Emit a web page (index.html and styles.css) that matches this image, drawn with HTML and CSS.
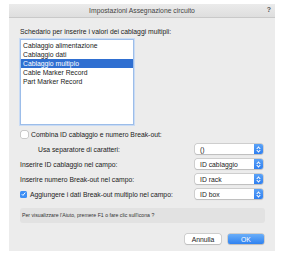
FILE: index.html
```html
<!DOCTYPE html>
<html lang="it">
<head>
  <meta charset="UTF-8" />
  <title>Impostazioni Assegnazione circuito</title>
  <link rel="stylesheet" href="styles.css">
</head>
<body>
  <div class="dialog">
    <div class="titlebar">
      <span class="title">Impostazioni Assegnazione circuito</span>
      <span class="help">?</span>
    </div>

    <div class="content">
      <div class="label">Schedario per inserire i valori dei cablaggi multipli:</div>
      <ul class="list">
        <li>Cablaggio alimentazione</li>
        <li>Cablaggio dati</li>
        <li class="selected">Cablaggio multiplo</li>
        <li>Cable Marker Record</li>
        <li>Part Marker Record</li>
      </ul>

      <div class="check-row">
        <span class="box"></span>
        <span>Combina ID cablaggio e numero Break-out:</span>
      </div>

      <div class="field-row">
        <span class="indent">Usa separatore di caratteri:</span>
        <div class="popup"><span>()</span><i class="arrows"></i></div>
      </div>
      <div class="field-row">
        <span>Inserire ID cablaggio nel campo:</span>
        <div class="popup"><span>ID cablaggio</span><i class="arrows"></i></div>
      </div>
      <div class="field-row">
        <span>Inserire numero Break-out nel campo:</span>
        <div class="popup"><span>ID rack</span><i class="arrows"></i></div>
      </div>
      <div class="field-row">
        <span class="check-label"><span class="box checked">
          <svg viewBox="0 0 8 8" width="8" height="8"><path d="M2 4.2 L3.4 5.6 L6 2.4" fill="none" stroke="#fff" stroke-width="1.1"/></svg>
        </span>Aggiungere i dati Break-out multiplo nel campo:</span>
        <div class="popup"><span>ID box</span><i class="arrows"></i></div>
      </div>

      <div class="hint">Per visualizzare l'Aiuto, premere F1 o fare clic sull'icona ?</div>

      <div class="buttons">
        <button class="btn">Annulla</button>
        <button class="btn primary">OK</button>
      </div>
    </div>
  </div>
</body>
</html>
```

FILE: styles.css
```css
* {
  box-sizing: border-box;
}

body {
  margin: 0;
  background: #fff;
  font-family: 'Liberation Sans', Arial, sans-serif;
  font-size: 6.8px;
  color: #222;
}

.dialog {
  margin: 4px 0 0 9px;
  width: 266px;
  height: 247px;
  background: #ececec;
  display: flex;
  flex-direction: column;
}

.titlebar {
  height: 14px;
  display: flex;
  align-items: center;
  justify-content: center;
  position: relative;
  background: linear-gradient(#ebebeb, #dedede);
  border-bottom: 1px solid #c9c9c9;
  color: #444;
}

.title {
  font-size: 6.8px;
}

.help {
  position: absolute;
  right: 4px;
  top: 2px;
  font-weight: bold;
  color: #555;
  font-size: 7px;
}

.content {
  padding: 0 10px 0 11px;
  display: flex;
  flex-direction: column;
}

.label {
  margin-top: 9px;
  line-height: 9px;
}

.list {
  list-style: none;
  margin: 3px 0 0;
  padding: 1px 0 0;
  width: 114px;
  height: 86px;
  background: #fff;
  border: 1px solid #9cbde9;
  box-shadow: 0 0 0 1px #c9dbf4;
}

.list li {
  line-height: 9px;
  height: 9px;
  padding-left: 2px;
}

.list li.selected {
  background: #2f6fd1;
  color: #fff;
}

.check-row {
  margin-top: 5px;
  height: 9px;
  display: flex;
  align-items: center;
  gap: 3px;
  padding-left: 1px;
}

.box {
  width: 7px;
  height: 7px;
  border-radius: 1.5px;
  background: #fff;
  box-shadow: 0 0 0 0.5px #a8a8a8;
  display: inline-flex;
  align-items: center;
  justify-content: center;
}

.box.checked {
  background: #3d8ff5;
  box-shadow: none;
  margin-right: 3px;
}

.field-row {
  height: 10px;
  margin-top: 5px;
  display: flex;
  align-items: center;
  justify-content: space-between;
  padding-right: 2px;
}

.field-row:first-of-type {
  margin-top: 2px;
}

.indent {
  padding-left: 18px;
}

.check-label {
  display: flex;
  align-items: center;
}

.popup {
  width: 68px;
  height: 10px;
  background: #fff;
  border-radius: 2px;
  box-shadow: 0 0 0 0.5px #b4b4b4, 0 0.5px 1px rgba(0,0,0,0.15);
  display: flex;
  align-items: center;
  justify-content: space-between;
  padding-left: 5px;
  overflow: hidden;
}

.arrows {
  width: 9px;
  height: 10px;
  background: linear-gradient(#5aa2f7, #2f7ff0);
  position: relative;
}

.arrows::before,
.arrows::after {
  content: "";
  position: absolute;
  left: 3px;
  width: 2px;
  height: 2px;
  border-left: 1px solid #fff;
  border-top: 1px solid #fff;
}

.arrows::before {
  top: 2.5px;
  transform: rotate(45deg);
}

.arrows::after {
  top: 5px;
  transform: rotate(-135deg);
}

.hint {
  margin-top: 9px;
  height: 15px;
  border-radius: 3px;
  background: #e2e2e2;
  font-size: 5.2px;
  padding: 4px 0 0 2px;
  color: #333;
}

.buttons {
  margin-top: 11px;
  display: flex;
  justify-content: flex-end;
  gap: 7px;
  padding-right: 1px;
}

.btn {
  width: 36px;
  height: 10px;
  padding: 0;
  font-family: inherit;
  font-size: 6.8px;
  color: #222;
  background: #fff;
  border: none;
  border-radius: 2px;
  box-shadow: 0 0 0 0.5px #b4b4b4, 0 0.5px 1px rgba(0,0,0,0.15);
}

.btn.primary {
  background: linear-gradient(#6aaef8, #2f82f1);
  color: #fff;
}
```
